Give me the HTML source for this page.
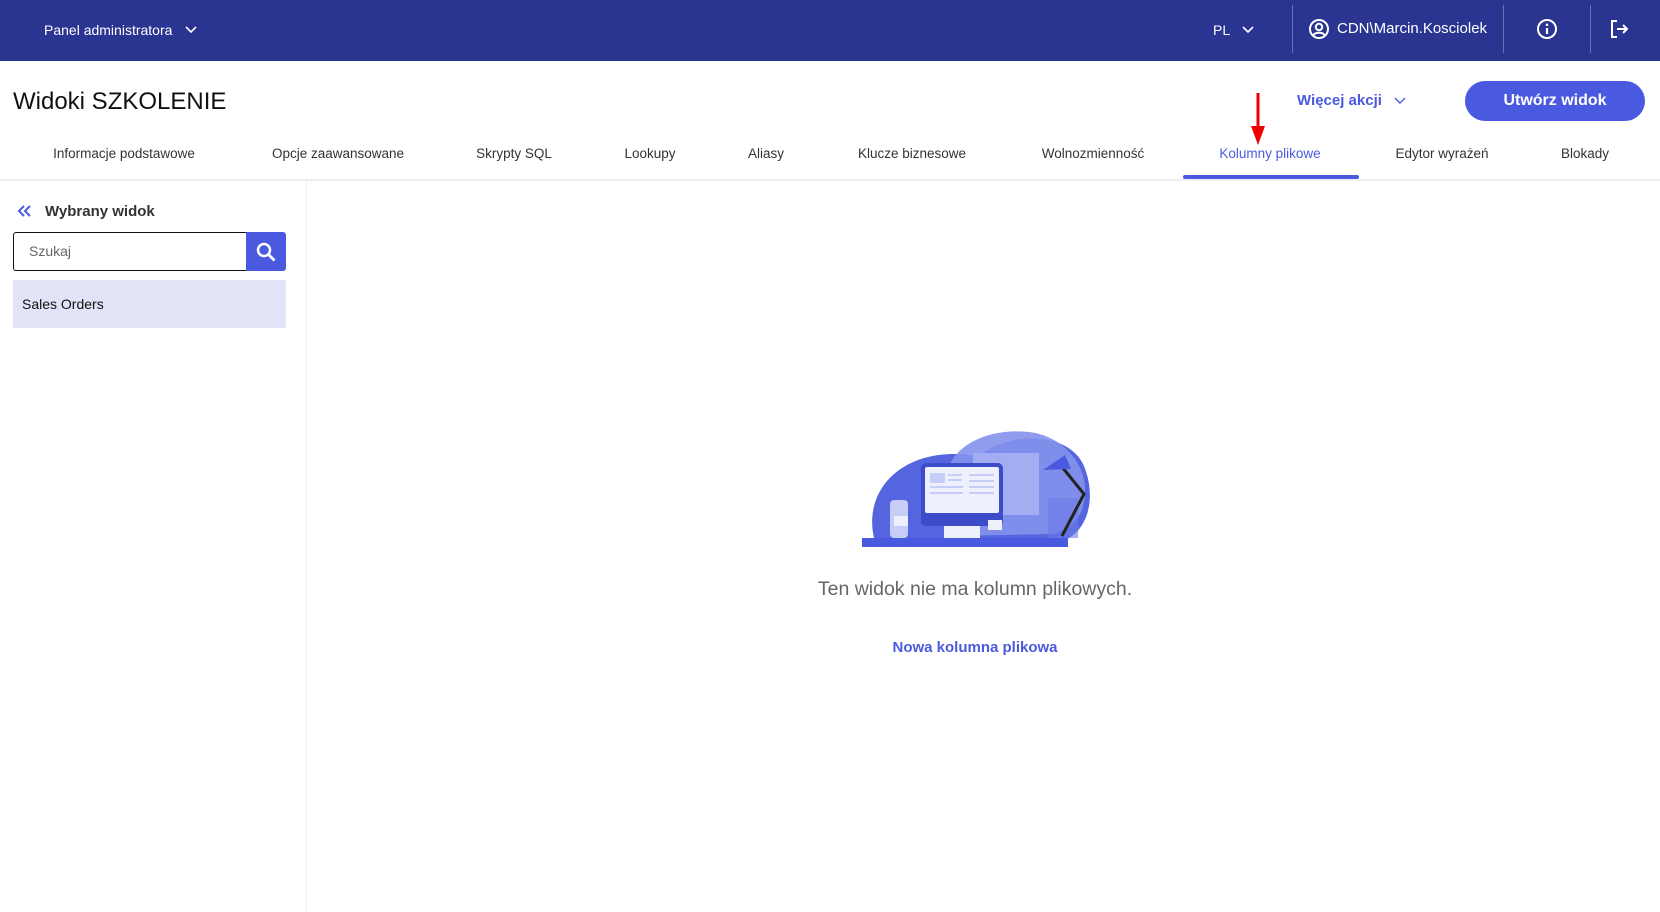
<!DOCTYPE html>
<html><head><meta charset="utf-8">
<style>
*{box-sizing:border-box;margin:0;padding:0}
body{width:1660px;height:912px;overflow:hidden;background:#fff;font-family:"Liberation Sans",sans-serif;color:#222;position:relative}
.abs{position:absolute;white-space:nowrap}
.hdr{position:absolute;left:0;top:0;width:1660px;height:61px;background:#2a3592;color:#fff}
.div{position:absolute;top:5px;width:1px;height:48px;background:#6a72b4}
.tab{position:absolute;top:146px;font-size:13.5px;color:#333;transform:translateX(-50%)}
</style></head><body>
<div class="hdr">
  <div class="abs" style="left:44px;top:22px;font-size:14px">Panel administratora</div>
  <svg class="abs" style="left:184px;top:25px" width="14" height="10" viewBox="0 0 14 10"><path d="M2 2l5 5 5-5" fill="none" stroke="#fff" stroke-width="1.6"/></svg>
  <div class="abs" style="left:1213px;top:22px;font-size:14px">PL</div>
  <svg class="abs" style="left:1241px;top:25px" width="14" height="10" viewBox="0 0 14 10"><path d="M2 2l5 5 5-5" fill="none" stroke="#fff" stroke-width="1.6"/></svg>
  <div class="div" style="left:1292px"></div>
  <svg class="abs" style="left:1308px;top:18px" width="22" height="22" viewBox="0 0 22 22"><circle cx="11" cy="11" r="9" fill="none" stroke="#fff" stroke-width="2"/><circle cx="11" cy="9" r="3.2" fill="none" stroke="#fff" stroke-width="2"/><path d="M5.5 17c2-3 9-3 11 0" fill="none" stroke="#fff" stroke-width="2"/></svg>
  <div class="abs" style="left:1337px;top:20px;font-size:15px">CDN\Marcin.Kosciolek</div>
  <div class="div" style="left:1503px"></div>
  <svg class="abs" style="left:1536px;top:18px" width="22" height="22" viewBox="0 0 22 22"><circle cx="11" cy="11" r="9" fill="none" stroke="#fff" stroke-width="2"/><path d="M11 10v6" stroke="#fff" stroke-width="2.2"/><circle cx="11" cy="6.8" r="1.3" fill="#fff"/></svg>
  <div class="div" style="left:1590px"></div>
  <svg class="abs" style="left:1608px;top:18px" width="22" height="22" viewBox="0 0 22 22"><path d="M9 3H4v16h5" fill="none" stroke="#fff" stroke-width="2"/><path d="M9 11h10M15 7l4 4-4 4" fill="none" stroke="#fff" stroke-width="2"/></svg>
</div>

<div class="abs" style="left:13px;top:88px;font-size:24px;color:#111">Widoki SZKOLENIE</div>
<div class="abs" style="left:1297px;top:92px;font-size:15px;color:#4a5ae0;font-weight:bold">Więcej akcji</div>
<svg class="abs" style="left:1393px;top:96px" width="14" height="10" viewBox="0 0 14 10"><path d="M2 2l5 5 5-5" fill="none" stroke="#4a5ae0" stroke-width="1.4"/></svg>
<div class="abs" style="left:1465px;top:81px;width:180px;height:40px;border-radius:20px;background:#4a5ae0;color:#fff;font-size:16px;font-weight:bold;text-align:center;line-height:40px">Utwórz widok</div>

<div class="tab" style="left:124px">Informacje podstawowe</div>
<div class="tab" style="left:338px">Opcje zaawansowane</div>
<div class="tab" style="left:514px">Skrypty SQL</div>
<div class="tab" style="left:650px">Lookupy</div>
<div class="tab" style="left:766px">Aliasy</div>
<div class="tab" style="left:912px">Klucze biznesowe</div>
<div class="tab" style="left:1093px">Wolnozmienność</div>
<div class="tab" style="left:1270px;color:#4a5ae0">Kolumny plikowe</div>
<div class="tab" style="left:1442px">Edytor wyrażeń</div>
<div class="tab" style="left:1585px">Blokady</div>
<div class="abs" style="left:1183px;top:175px;width:176px;height:4px;border-radius:2px;background:#4a5ae0"></div>
<div class="abs" style="left:0;top:179px;width:1660px;height:2px;background:#eceef6"></div>
<svg class="abs" style="left:1250px;top:93px" width="16" height="54" viewBox="0 0 16 54"><path d="M8 0v36" stroke="#e00" stroke-width="3"/><path d="M1 33h14L8 52z" fill="#e00"/></svg>

<div class="abs" style="left:306px;top:181px;width:1px;height:731px;background:#eceef6"></div>
<svg class="abs" style="left:17px;top:204px" width="16" height="14" viewBox="0 0 16 14"><path d="M7 2L2 7l5 5M13 2L8 7l5 5" fill="none" stroke="#4a5ae0" stroke-width="2"/></svg>
<div class="abs" style="left:45px;top:203px;font-size:15px;font-weight:bold;color:#333">Wybrany widok</div>
<div class="abs" style="left:13px;top:232px;width:234px;height:39px;border:1.5px solid #111;border-radius:3px 0 0 3px"></div>
<div class="abs" style="left:29px;top:243px;font-size:14px;color:#666">Szukaj</div>
<div class="abs" style="left:246px;top:232px;width:40px;height:39px;background:#4a5ae0;border-radius:0 3px 3px 0"></div>
<svg class="abs" style="left:255px;top:241px" width="22" height="22" viewBox="0 0 22 22"><circle cx="9" cy="9" r="6" fill="none" stroke="#fff" stroke-width="2.5"/><path d="M13.5 13.5l6 6" stroke="#fff" stroke-width="2.8"/></svg>
<div class="abs" style="left:13px;top:280px;width:273px;height:48px;background:#e2e3f7"></div>
<div class="abs" style="left:22px;top:296px;font-size:14px;color:#111">Sales Orders</div>

<svg class="abs" style="left:858px;top:425px" width="240" height="125" viewBox="858 425 240 125">
  <path d="M874 538c-8-35 10-68 50-80 22-6 40-4 55-2 30-25 90-25 105 10 12 30 5 60-15 72z" fill="#5565e0"/>
  <path d="M947 470c10-28 45-42 82-38 35 4 62 35 55 70-3 15-10 25-30 32l-100 2z" fill="#8491ec" opacity=".9"/>
  <rect x="973" y="453" width="66" height="62" fill="#a3adf2"/>
  <rect x="1048" y="498" width="30" height="40" fill="#6b79e6" opacity=".6"/>
  <rect x="921" y="463" width="82" height="63" rx="5" fill="#3d4cc8"/>
  <rect x="925" y="467" width="74" height="46" rx="2" fill="#eef0fd"/>
  <rect x="930" y="473" width="15" height="10" fill="#c6cdf6"/>
  <path d="M948 475h14M948 480h14M930 487h33M930 493h33M969 475h25M969 481h25M969 487h25M969 493h25" stroke="#c6cdf6" stroke-width="2"/>
  <rect x="944" y="526" width="36" height="12" fill="#eef0fd"/>
  <path d="M1058 462l26 32-22 42" fill="none" stroke="#222" stroke-width="3"/>
  <path d="M1043 470l22-15 6 14z" fill="#4a5ae0"/>
  <rect x="890" y="500" width="18" height="38" rx="4" fill="#c6cdf6"/>
  <rect x="894" y="516" width="14" height="10" fill="#eef0fd"/>
  <rect x="988" y="520" width="14" height="10" fill="#eef0fd"/>
  <rect x="862" y="538" width="206" height="9" fill="#4a5ae0"/>
</svg>
<div class="abs" style="left:0;width:1950px;text-align:center;top:578px;font-size:19.5px;color:#666">Ten widok nie ma kolumn plikowych.</div>
<div class="abs" style="left:0;width:1950px;text-align:center;top:639px;font-size:15px;color:#4a5ae0;font-weight:bold">Nowa kolumna plikowa</div>
</body></html>
